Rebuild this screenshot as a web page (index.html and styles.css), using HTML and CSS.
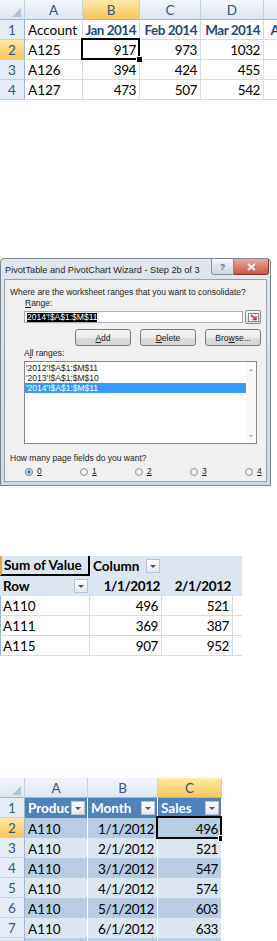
FILE: index.html
```html
<!DOCTYPE html>
<html lang="en">
<head>
    <meta charset="UTF-8">
    <meta name="viewport" content="width=device-width, initial-scale=1.0">
    <title>Consolidate ranges</title>
    <link rel="stylesheet" href="styles.css">
</head>
<body>
    <div class="page">

        <!-- source sheet -->
        <div class="sheet sheet-top">
            <div class="hd corner"><svg width="9" height="9" viewBox="0 0 9 9"><polygon points="9,0 9,9 0,9" fill="#b6c2d0"/></svg></div>
            <div class="hd">A</div>
            <div class="hd sel">B</div>
            <div class="hd">C</div>
            <div class="hd">D</div>
            <div class="hd"></div>

            <div class="hd rh">1</div>
            <div class="cell">Account</div>
            <div class="cell month">Jan 2014</div>
            <div class="cell month">Feb 2014</div>
            <div class="cell month">Mar 2014</div>
            <div class="cell month">Apr 2014</div>

            <div class="hd rh sel">2</div>
            <div class="cell">A125</div>
            <div class="cell num active">917</div>
            <div class="cell num">973</div>
            <div class="cell num">1032</div>
            <div class="cell num"></div>

            <div class="hd rh">3</div>
            <div class="cell">A126</div>
            <div class="cell num">394</div>
            <div class="cell num">424</div>
            <div class="cell num">455</div>
            <div class="cell num"></div>

            <div class="hd rh">4</div>
            <div class="cell">A127</div>
            <div class="cell num">473</div>
            <div class="cell num">507</div>
            <div class="cell num">542</div>
            <div class="cell num"></div>
        </div>

        <!-- wizard dialog -->
        <div class="wizard">
            <div class="wiz-title">
                <span class="wiz-caption">PivotTable and PivotChart Wizard - Step 2b of 3</span>
                <div class="wiz-ctrls">
                    <span class="btn-help">?</span>
                    <span class="btn-close"><svg width="9" height="8" viewBox="0 0 9 8"><path d="M1 1 L8 7 M8 1 L1 7" stroke="#fff" stroke-width="1.8"/></svg></span>
                </div>
            </div>
            <div class="wiz-body">
                <p class="line q">Where are the worksheet ranges that you want to consolidate?</p>
                <p class="line lbl-range"><u>R</u>ange:</p>
                <div class="range-row">
                    <div class="range-input"><span class="sel-text">2014'!$A$1:$M$11</span></div>
                    <span class="collapse">
                        <svg width="11" height="9" viewBox="0 0 11 9">
                            <rect x="0.5" y="0.5" width="10" height="8" fill="#fff" stroke="#7f8c9c"/>
                            <path d="M1 3.5 H10 M1 6 H10 M4 1 V8 M7 1 V8" stroke="#b9c6d6" stroke-width="0.8"/>
                            <path d="M3 2 L8 6.5 M8 3.5 V6.5 H5" stroke="#d2302a" stroke-width="1.4" fill="none"/>
                        </svg>
                    </span>
                </div>
                <div class="btn-row">
                    <button class="wbtn"><u>A</u>dd</button>
                    <button class="wbtn"><u>D</u>elete</button>
                    <button class="wbtn">Bro<u>w</u>se...</button>
                </div>
                <p class="line lbl-all">A<u>l</u>l ranges:</p>
                <div class="listbox">
                    <div class="items">
                        <div class="item">'2012'!$A$1:$M$11</div>
                        <div class="item">'2013'!$A$1:$M$10</div>
                        <div class="item picked">'2014'!$A$1:$M$11</div>
                    </div>
                    <div class="scroll">
                        <span class="arr up"></span>
                        <span class="arr down"></span>
                    </div>
                </div>
                <p class="line q q2">How many page fields do you want?</p>
                <div class="radios">
                    <label class="radio on"><span class="dot"></span><u>0</u></label>
                    <label class="radio"><span class="dot"></span><u>1</u></label>
                    <label class="radio"><span class="dot"></span><u>2</u></label>
                    <label class="radio"><span class="dot"></span><u>3</u></label>
                    <label class="radio"><span class="dot"></span><u>4</u></label>
                </div>
            </div>
        </div>

        <!-- pivot result -->
        <div class="pivot">
            <div class="pv-h pv-active">Sum of Value</div>
            <div class="pv-h"><span class="txt">Column</span><span class="dd"></span></div>
            <div class="pv-h"></div>
            <div class="pv-h"></div>

            <div class="pv-h"><span class="txt">Row</span><span class="dd"></span></div>
            <div class="pv-h right">1/1/2012</div>
            <div class="pv-h right">2/1/2012</div>
            <div class="pv-h"></div>

            <div class="pv-c first">A110</div>
            <div class="pv-c right">496</div>
            <div class="pv-c right">521</div>
            <div class="pv-c last"></div>

            <div class="pv-c first">A111</div>
            <div class="pv-c right">369</div>
            <div class="pv-c right">387</div>
            <div class="pv-c last"></div>

            <div class="pv-c first">A115</div>
            <div class="pv-c right">907</div>
            <div class="pv-c right">952</div>
            <div class="pv-c last"></div>
        </div>

        <!-- flat table -->
        <div class="sheet sheet-bottom">
            <div class="hd corner"><svg width="9" height="9" viewBox="0 0 9 9"><polygon points="9,0 9,9 0,9" fill="#b6c2d0"/></svg></div>
            <div class="hd">A</div>
            <div class="hd">B</div>
            <div class="hd sel">C</div>

            <div class="hd rh">1</div>
            <div class="cell tbl-h"><span class="txt">Produc</span><span class="dd"></span></div>
            <div class="cell tbl-h"><span class="txt">Month</span><span class="dd"></span></div>
            <div class="cell tbl-h"><span class="txt">Sales</span><span class="dd"></span></div>

            <div class="hd rh sel">2</div>
            <div class="cell band-a">A110</div>
            <div class="cell band-a num">1/1/2012</div>
            <div class="cell band-a num active">496</div>

            <div class="hd rh">3</div>
            <div class="cell band-b">A110</div>
            <div class="cell band-b num">2/1/2012</div>
            <div class="cell band-b num">521</div>

            <div class="hd rh">4</div>
            <div class="cell band-a">A110</div>
            <div class="cell band-a num">3/1/2012</div>
            <div class="cell band-a num">547</div>

            <div class="hd rh">5</div>
            <div class="cell band-b">A110</div>
            <div class="cell band-b num">4/1/2012</div>
            <div class="cell band-b num">574</div>

            <div class="hd rh">6</div>
            <div class="cell band-a">A110</div>
            <div class="cell band-a num">5/1/2012</div>
            <div class="cell band-a num">603</div>

            <div class="hd rh">7</div>
            <div class="cell band-b">A110</div>
            <div class="cell band-b num">6/1/2012</div>
            <div class="cell band-b num">633</div>

            <div class="hd rh"></div>
            <div class="cell band-a"></div>
            <div class="cell band-a num"></div>
            <div class="cell band-a num"></div>
        </div>

    </div>
</body>
</html>
```

FILE: styles.css
```css
html, body {
    overflow: hidden;
}
body {
    margin: 0;
    background: #fff;
    font-family: Lato, "Liberation Sans", Arial, sans-serif;
    color: #000;
}
.page {
    display: flex;
    flex-direction: column;
    align-items: flex-start;
}

/* spreadsheet grids */
.sheet {
    display: grid;
    grid-auto-rows: 20px;
    font-size: 13.5px;
    overflow: hidden;
}
.sheet-top {
    grid-template-columns: 25px 58px 57px 61px 63px 63px;
    width: 277px;
}
.sheet-bottom {
    grid-template-columns: 25px 63px 70px 64px;
    margin-top: 122px;
}
.hd {
    box-sizing: border-box;
    display: flex;
    align-items: center;
    justify-content: center;
    background: linear-gradient(#f2f6fb, #dbe5f1);
    color: #34557c;
    border-right: 1px solid #c3d1e2;
    border-bottom: 1px solid #9eb6ce;
}
.hd.rh {
    background: #e4ecf7;
    border-bottom: 1px solid #c3d1e2;
    border-right: 1px solid #9eb6ce;
}
.hd.sel {
    background: linear-gradient(#fde8a8, #f6c75c);
    color: #34557c;
}
.corner {
    justify-content: flex-end;
    align-items: flex-end;
    padding: 0 3px 2px 0;
}
.cell {
    box-sizing: border-box;
    display: flex;
    align-items: flex-end;
    padding: 0 3px 1px 3px;
    white-space: nowrap;
    overflow: hidden;
    border-right: 1px solid #d8dde5;
    border-bottom: 1px solid #d8dde5;
}
.num {
    justify-content: flex-end;
    letter-spacing: -0.4px;
}
.month {
    justify-content: flex-end;
    font-weight: bold;
    color: #1f497d;
    letter-spacing: -0.5px;
}
.active {
    position: relative;
    overflow: visible;
    z-index: 2;
}
.active::after {
    content: "";
    position: absolute;
    left: -2px;
    top: -2px;
    right: -1px;
    bottom: -1px;
    border: 2px solid #000;
}
.active::before {
    content: "";
    position: absolute;
    right: -4px;
    bottom: -4px;
    width: 5px;
    height: 5px;
    background: #000;
    border: 1px solid #fff;
    z-index: 3;
}

/* table in the bottom sheet */
.tbl-h {
    background: #4f81bd;
    color: #fff;
    font-weight: bold;
    border-right: 1px solid #fff;
    border-bottom: none;
    align-items: center;
    padding: 0 2px 0 3px;
    gap: 2px;
}
.txt {
    flex: 1;
    min-width: 0;
    overflow: hidden;
}
.band-a {
    background: #b8cce4;
    border-right: 1px solid #fff;
    border-bottom: none;
}
.band-b {
    background: #dce6f1;
    border-right: 1px solid #fff;
    border-bottom: none;
}
.dd {
    box-sizing: border-box;
    flex-shrink: 0;
    width: 14px;
    height: 14px;
    display: flex;
    align-items: center;
    justify-content: center;
    background: linear-gradient(#ffffff, #e3e8ef);
    border: 1px solid #b8c4d3;
}
.dd::after {
    content: "";
    border-left: 3px solid transparent;
    border-right: 3px solid transparent;
    border-top: 3px solid #555;
}

/* wizard dialog */
.wizard {
    margin-top: 158px;
    width: 271px;
    box-sizing: border-box;
    background: linear-gradient(#dfe6ee, #cfd9e4);
    border: 1px solid #7b838d;
    border-radius: 4px 4px 0 0;
    padding: 0 3px 3px 3px;
    font-family: "Liberation Sans", Arial, sans-serif;
    font-size: 8.5px;
    color: #1b1b1b;
}
.wiz-title {
    height: 20px;
    display: flex;
    justify-content: space-between;
    align-items: flex-start;
}
.wiz-caption {
    padding: 6px 0 0 1px;
    font-size: 9.2px;
    color: #1e1e1e;
}
.wiz-ctrls {
    display: flex;
    margin-right: -2px;
}
.btn-help {
    box-sizing: border-box;
    width: 23px;
    height: 16px;
    display: flex;
    align-items: center;
    justify-content: center;
    background: linear-gradient(#f1f4f8, #cdd7e3);
    border: 1px solid #8893a1;
    border-top: none;
    border-radius: 0 0 0 3px;
    color: #5c6e86;
    font-weight: bold;
    font-size: 9px;
}
.btn-close {
    box-sizing: border-box;
    width: 35px;
    height: 16px;
    display: flex;
    align-items: center;
    justify-content: center;
    background: linear-gradient(#e9a99e, #c9574a);
    border: 1px solid #86382f;
    border-top: none;
    border-left: none;
    border-radius: 0 0 3px 0;
}
.wiz-body {
    background: #f0f0f0;
    border: 1px solid #97a2b0;
    padding: 7px 0 4px 0;
}
.line {
    margin: 0;
    line-height: 11px;
    white-space: nowrap;
}
.q {
    margin-left: 5px;
}
.lbl-range {
    margin-left: 20px;
}
.range-row {
    display: flex;
    align-items: center;
    gap: 2px;
    margin: 1px 0 0 19px;
    height: 14px;
}
.range-input {
    box-sizing: border-box;
    width: 219px;
    height: 12px;
    background: #fff;
    border: 1px solid #a6acb5;
    padding-left: 2px;
    display: flex;
    align-items: center;
}
.sel-text {
    background: #000;
    color: #fff;
    line-height: 9px;
}
.collapse {
    box-sizing: border-box;
    width: 16px;
    height: 14px;
    display: flex;
    align-items: center;
    justify-content: center;
    background: linear-gradient(#f6f6f6, #dcdcdc);
    border: 1px solid #8c8c8c;
    border-radius: 2px;
}
.btn-row {
    display: flex;
    gap: 9px;
    margin: 5px 0 0 70px;
}
.wbtn {
    box-sizing: border-box;
    width: 56px;
    height: 17px;
    padding: 0;
    font-family: "Liberation Sans", Arial, sans-serif;
    font-size: 8.5px;
    color: #1b1b1b;
    background: linear-gradient(#f4f4f4 0%, #ececec 50%, #dddddd 51%, #d4d4d4 100%);
    border: 1px solid #7a7a7a;
    border-radius: 3px;
}
.lbl-all {
    margin: 2px 0 0 19px;
}
.listbox {
    box-sizing: border-box;
    width: 233px;
    height: 83px;
    margin: 2px 0 0 19px;
    background: #fff;
    border: 1px solid #848990;
    display: flex;
}
.items {
    flex: 1;
    padding-top: 1px;
}
.item {
    line-height: 10px;
    padding-left: 1px;
    white-space: nowrap;
}
.item.picked {
    background: #3399ff;
    color: #fff;
}
.scroll {
    width: 10px;
    background: #f9f9f9;
    display: flex;
    flex-direction: column;
    justify-content: space-between;
    align-items: center;
    padding: 7px 0 6px 0;
}
.arr {
    width: 0;
    height: 0;
    border-left: 2px solid transparent;
    border-right: 2px solid transparent;
}
.arr.up {
    border-bottom: 2px solid #a8a8a8;
}
.arr.down {
    border-top: 2px solid #a8a8a8;
}
.q2 {
    margin-top: 9px;
}
.radios {
    display: grid;
    grid-template-columns: repeat(5, 55px);
    margin: 2px 0 0 20px;
    line-height: 11px;
}
.radio {
    display: flex;
    align-items: center;
    gap: 4px;
}
.dot {
    box-sizing: border-box;
    width: 8px;
    height: 8px;
    border-radius: 50%;
    border: 1px solid #8e9297;
    background: radial-gradient(#ffffff, #dadada);
}
.radio.on .dot {
    background: radial-gradient(#2e5e9c 0, #4c86c4 35%, #e8eef5 45%, #e8eef5 100%);
    border-color: #56789e;
}

/* pivot table */
.pivot {
    display: grid;
    grid-template-columns: 90px 72px 71px 9px;
    grid-auto-rows: 20px;
    margin-top: 70px;
    font-size: 13.5px;
}
.pv-h {
    box-sizing: border-box;
    display: flex;
    align-items: center;
    gap: 2px;
    padding: 0 2px 0 3px;
    background: #dce6f1;
    font-weight: bold;
    white-space: nowrap;
}
.pv-h.right {
    justify-content: flex-end;
    letter-spacing: -0.4px;
}
.pv-active {
    border-left: 2px solid #e4aa3c;
    border-right: 2px solid #000;
    border-bottom: 2px solid #000;
    padding-left: 2px;
}
.pv-c {
    box-sizing: border-box;
    display: flex;
    align-items: flex-end;
    padding: 0 3px 1px 3px;
    border-right: 1px solid #d5dce6;
    border-bottom: 1px solid #d5dce6;
    white-space: nowrap;
}
.pv-c.first {
    border-left: 1px solid #9cb5d6;
    padding-left: 2px;
}
.pv-c.right {
    justify-content: flex-end;
    letter-spacing: -0.4px;
}
.pv-c.last {
    border-right: none;
}
```
